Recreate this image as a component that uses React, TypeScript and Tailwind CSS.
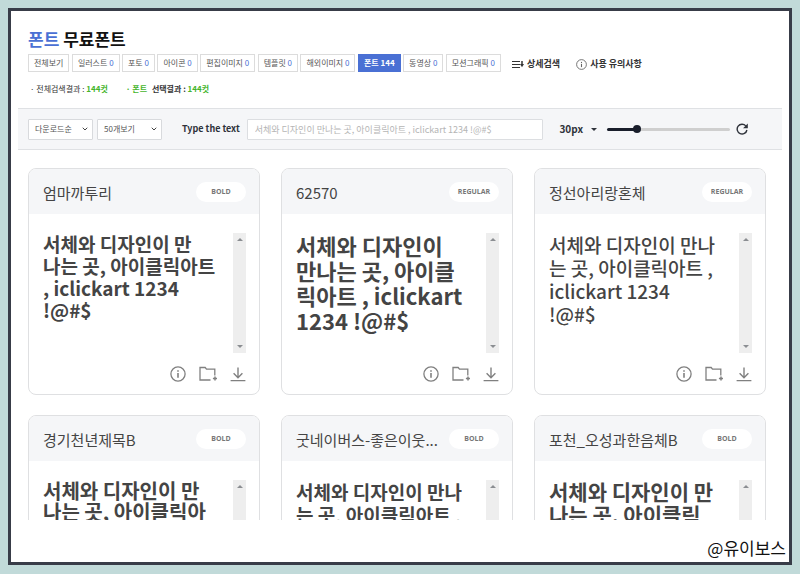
import { useState } from "react";
import type { ReactNode } from "react";
import { ChevronDown } from "lucide-react";

const SAMPLE_TEXT = "서체와 디자인이 만나는 곳, 아이클릭아트 , iclickart 1234 !@#$";

interface FontItem {
  name: string;
  weight: string;
  previewClass: string;
  lines: string[];
}

const CATEGORIES = [
  { label: "전체보기", count: null },
  { label: "일러스트", count: 0 },
  { label: "포토", count: 0 },
  { label: "아이콘", count: 0 },
  { label: "편집이미지", count: 0 },
  { label: "템플릿", count: 0 },
  { label: "해외이미지", count: 0 },
  { label: "폰트", count: 144 },
  { label: "동영상", count: 0 },
  { label: "모션그래픽", count: 0 },
];

const FONTS: FontItem[] = [
  {
    name: "엄마까투리",
    weight: "BOLD",
    previewClass: "text-[19px] leading-[22px] font-bold",
    lines: ["서체와 디자인이 만", "나는 곳, 아이클릭아트", ", iclickart 1234", "!@#$"],
  },
  {
    name: "62570",
    weight: "REGULAR",
    previewClass: "text-[22px] leading-[25px] font-bold",
    lines: ["서체와 디자인이", "만나는 곳, 아이클", "릭아트 , iclickart", "1234 !@#$"],
  },
  {
    name: "정선아리랑혼체",
    weight: "REGULAR",
    previewClass: "text-[19px] leading-[23px] font-medium",
    lines: ["서체와 디자인이 만나", "는 곳, 아이클릭아트 ,", "iclickart 1234", "!@#$"],
  },
  {
    name: "경기천년제목B",
    weight: "BOLD",
    previewClass: "text-[20px] leading-[21px] font-bold",
    lines: ["서체와 디자인이 만", "나는 곳, 아이클릭아", "트 , iclickart 1234", "!@#$"],
  },
  {
    name: "굿네이버스-좋은이웃...",
    weight: "BOLD",
    previewClass: "text-[19px] leading-[23px] font-bold",
    lines: ["서체와 디자인이 만나", "는 곳, 아이클릭아트 ,", "iclickart 1234", "!@#$"],
  },
  {
    name: "포천_오성과한음체B",
    weight: "BOLD",
    previewClass: "text-[21px] leading-[23px] font-bold",
    lines: ["서체와 디자인이 만", "나는 곳, 아이클릭", "아트 , iclickart", "1234 !@#$"],
  },
];

const InfoIcon = ({ className }: { className: string }) => (
  <svg viewBox="0 0 16 16" className={className} fill="none" stroke="currentColor" aria-hidden="true">
    <circle cx="8" cy="8" r="7.1" strokeWidth="1.3" />
    <path d="M8 7v4.8" strokeWidth="1.6" />
    <path d="M8 4.2v1.6" strokeWidth="1.6" />
  </svg>
);

const FolderIcon = () => (
  <svg viewBox="0 0 18 16" className="h-4 w-[18px]" fill="none" stroke="currentColor" strokeWidth="1.3" aria-hidden="true">
    <path d="M11.5 14H1V1.5h5.2l1.3 1.7h8.3v6.3" />
    <path d="M16 10.4v4.2M13.9 12.5h4.2" strokeWidth="1.5" />
  </svg>
);

const DownloadIcon = () => (
  <svg viewBox="0 0 16 16" className="size-4" fill="none" stroke="currentColor" strokeWidth="1.4" aria-hidden="true">
    <path d="M8 1.5v10M3.6 7.3L8 11.7l4.4-4.4M.6 14.6h14.8" />
  </svg>
);

const DetailIcon = () => (
  <svg viewBox="0 0 12 9" className="h-[9px] w-3" fill="none" stroke="currentColor" aria-hidden="true">
    <path d="M0 1.5h8M0 4.5h8M0 7.5h8" strokeWidth="1.2" />
    <path d="M10 1v4" strokeWidth="1.5" />
    <path d="M8 4h4L10 7.2z" fill="currentColor" stroke="none" />
  </svg>
);

const ReloadIcon = () => (
  <svg viewBox="0 0 12 12" className="size-3" fill="none" stroke="currentColor" aria-hidden="true">
    <path d="M9.8 2.9A4.9 4.9 0 1 0 10.9 7" strokeWidth="1.4" />
    <path d="M11.8.6v4.7H7.1z" fill="currentColor" stroke="none" />
  </svg>
);

const ToolbarSelect = ({ label, children }: { label: string; children: ReactNode }) => (
  <div className="relative w-[65px] shrink-0">
    <select
      aria-label={label}
      className="block h-[21px] w-full appearance-none rounded-[1px] border border-[#d8dadd] bg-white pl-1.5 text-[8px] text-[#555]"
    >
      {children}
    </select>
    <ChevronDown className="pointer-events-none absolute top-1.5 right-1 size-2 text-[#444]" strokeWidth={3} />
  </div>
);

const FontCard = ({ font }: { font: FontItem }) => (
  <article className="overflow-hidden rounded-lg border border-[#dfe0e2] bg-white">
    <header className="flex h-[45px] items-center justify-between bg-[#f5f6f8] pr-[13px] pl-3.5">
      <h2 className="pt-0.5 text-[15px] leading-6 whitespace-nowrap text-[#444]">{font.name}</h2>
      <span className="flex h-5 w-[50px] shrink-0 items-center justify-center rounded-full bg-white pt-px font-['Open_Sans',sans-serif] text-[7px] font-bold text-[#777]">
        {font.weight}
      </span>
    </header>
    <div className="flex justify-between pt-[19px] pr-[13px] pl-3.5">
      <p className={`whitespace-pre text-[#444] ${font.previewClass}`}>{font.lines.join("\n")}</p>
      <div className="flex h-[120px] w-[13px] shrink-0 flex-col items-center justify-between bg-[#eee] py-[5px]">
        <span className="border-x-[3px] border-b-[3px] border-x-transparent border-b-[#8b8e92]" />
        <span className="border-x-[3px] border-t-[3px] border-x-transparent border-t-[#8b8e92]" />
      </div>
    </div>
    <div className="flex justify-end gap-[13px] pt-[13px] pr-[13px] pb-3 text-[#808080]">
      <button type="button" aria-label={`${font.name} 정보`}>
        <InfoIcon className="size-4" />
      </button>
      <button type="button" aria-label={`${font.name} 폴더에 담기`}>
        <FolderIcon />
      </button>
      <button type="button" aria-label={`${font.name} 다운로드`}>
        <DownloadIcon />
      </button>
    </div>
  </article>
);

export default function App() {
  const [category, setCategory] = useState("폰트");
  const [size, setSize] = useState(30);
  const [text, setText] = useState("");

  const fill = ((size - 10) / 90) * 100;

  return (
    <div className="h-screen bg-[#c1dad9] px-2 pt-2 pb-[9px] font-['Noto_Sans_CJK_KR',sans-serif]">
      <main className="flex h-full flex-col border-[3px] border-[#383c48] bg-white px-[7px]">
        <div className="px-2.5 pt-4">
          <h1 className="text-[17px] leading-6 font-bold text-[#111]">
            <span className="text-[#4a70d4]">폰트</span> 무료폰트
          </h1>

          <div className="mt-[3px] flex items-center whitespace-nowrap">
            <nav className="flex w-[473px] justify-between">
              {CATEGORIES.map(({ label, count }) => {
                const active = label === category;
                return (
                  <button
                    key={label}
                    type="button"
                    onClick={() => setCategory(label)}
                    className={`h-[18px] border px-[5px] text-[8px] leading-4 ${
                      active ? "border-[#4a70d4] bg-[#4a70d4] font-bold text-white" : "border-[#dcdcdc] bg-white text-[#555]"
                    }`}
                  >
                    {label}
                    {count !== null && <span className={active ? "text-white" : "text-[#4a70d4]"}> {count}</span>}
                  </button>
                );
              })}
            </nav>
            <button type="button" className="ml-[11px] flex items-center gap-[3px] pt-0.5 text-[9px] leading-4 font-bold text-[#333]">
              <DetailIcon />
              상세검색
            </button>
            <button type="button" className="ml-4 flex items-center gap-[3px] pt-0.5 text-[9px] leading-4 font-bold text-[#333]">
              <InfoIcon className="size-[11px] text-[#666]" />
              사용 유의사항
            </button>
          </div>

          <div className="flex gap-[18px] pt-[11px] pb-[13px] text-[8px] leading-3 text-[#333]">
            <p className="pl-0.5">
              · 전체검색결과 : <strong className="text-[#46b52c]">144컷</strong>
            </p>
            <p className="font-bold">
              <span className="mr-[3px] text-[#46b52c]">· 폰트</span> 선택결과 : <span className="text-[#46b52c]">144컷</span>
            </p>
          </div>
        </div>

        <div className="flex h-[42px] shrink-0 items-center border-y border-[#dfe1e4] bg-[#f5f6f8] pr-[34px] pl-2.5 text-[#2f333b]">
          <div className="flex gap-1">
            <ToolbarSelect label="정렬">
              <option>다운로드순</option>
              <option>최신순</option>
            </ToolbarSelect>
            <ToolbarSelect label="보기 개수">
              <option>50개보기</option>
              <option>100개보기</option>
            </ToolbarSelect>
          </div>
          <label htmlFor="sample" className="ml-5 shrink-0 text-[9px] leading-4 font-bold">
            Type the text
          </label>
          <input
            id="sample"
            type="text"
            value={text}
            onChange={(e) => setText(e.target.value)}
            placeholder={SAMPLE_TEXT}
            className="ml-[7px] h-[21px] min-w-0 flex-1 rounded-[1px] border border-[#dcdee1] bg-white px-[7px] text-[9px] text-[#444] placeholder:text-[#b5b5b5]"
          />
          <button type="button" className="ml-4 flex shrink-0 items-center gap-2 text-[10px] leading-4 font-bold">
            {size}px
            <span className="border-x-[3px] border-t-[3px] border-x-transparent border-t-[#2f333b]" />
          </button>
          <input
            type="range"
            aria-label="글자 크기"
            min={10}
            max={100}
            value={size}
            onChange={(e) => setSize(Number(e.target.value))}
            className="ml-2.5 h-[3px] w-[123px] shrink-0 appearance-none rounded-full [&::-webkit-slider-thumb]:size-2 [&::-webkit-slider-thumb]:appearance-none [&::-webkit-slider-thumb]:rounded-full [&::-webkit-slider-thumb]:bg-[#191e2b]"
            style={{ background: `linear-gradient(to right, #191e2b ${fill}%, #cfcfcf ${fill}%)` }}
          />
          <button type="button" aria-label="초기화" className="ml-1.5 shrink-0" onClick={() => setSize(30)}>
            <ReloadIcon />
          </button>
        </div>

        <section className="mt-[18px] min-h-0 flex-1 overflow-hidden pr-4 pl-2.5">
          <div className="grid grid-cols-3 gap-x-[21px] gap-y-5">
            {FONTS.map((font) => (
              <FontCard key={font.name} font={font} />
            ))}
          </div>
        </section>

        <footer className="-mr-1 pt-4 pb-0.5 text-right text-[17px] leading-6 text-[#111]">@유이보스</footer>
      </main>
    </div>
  );
}
